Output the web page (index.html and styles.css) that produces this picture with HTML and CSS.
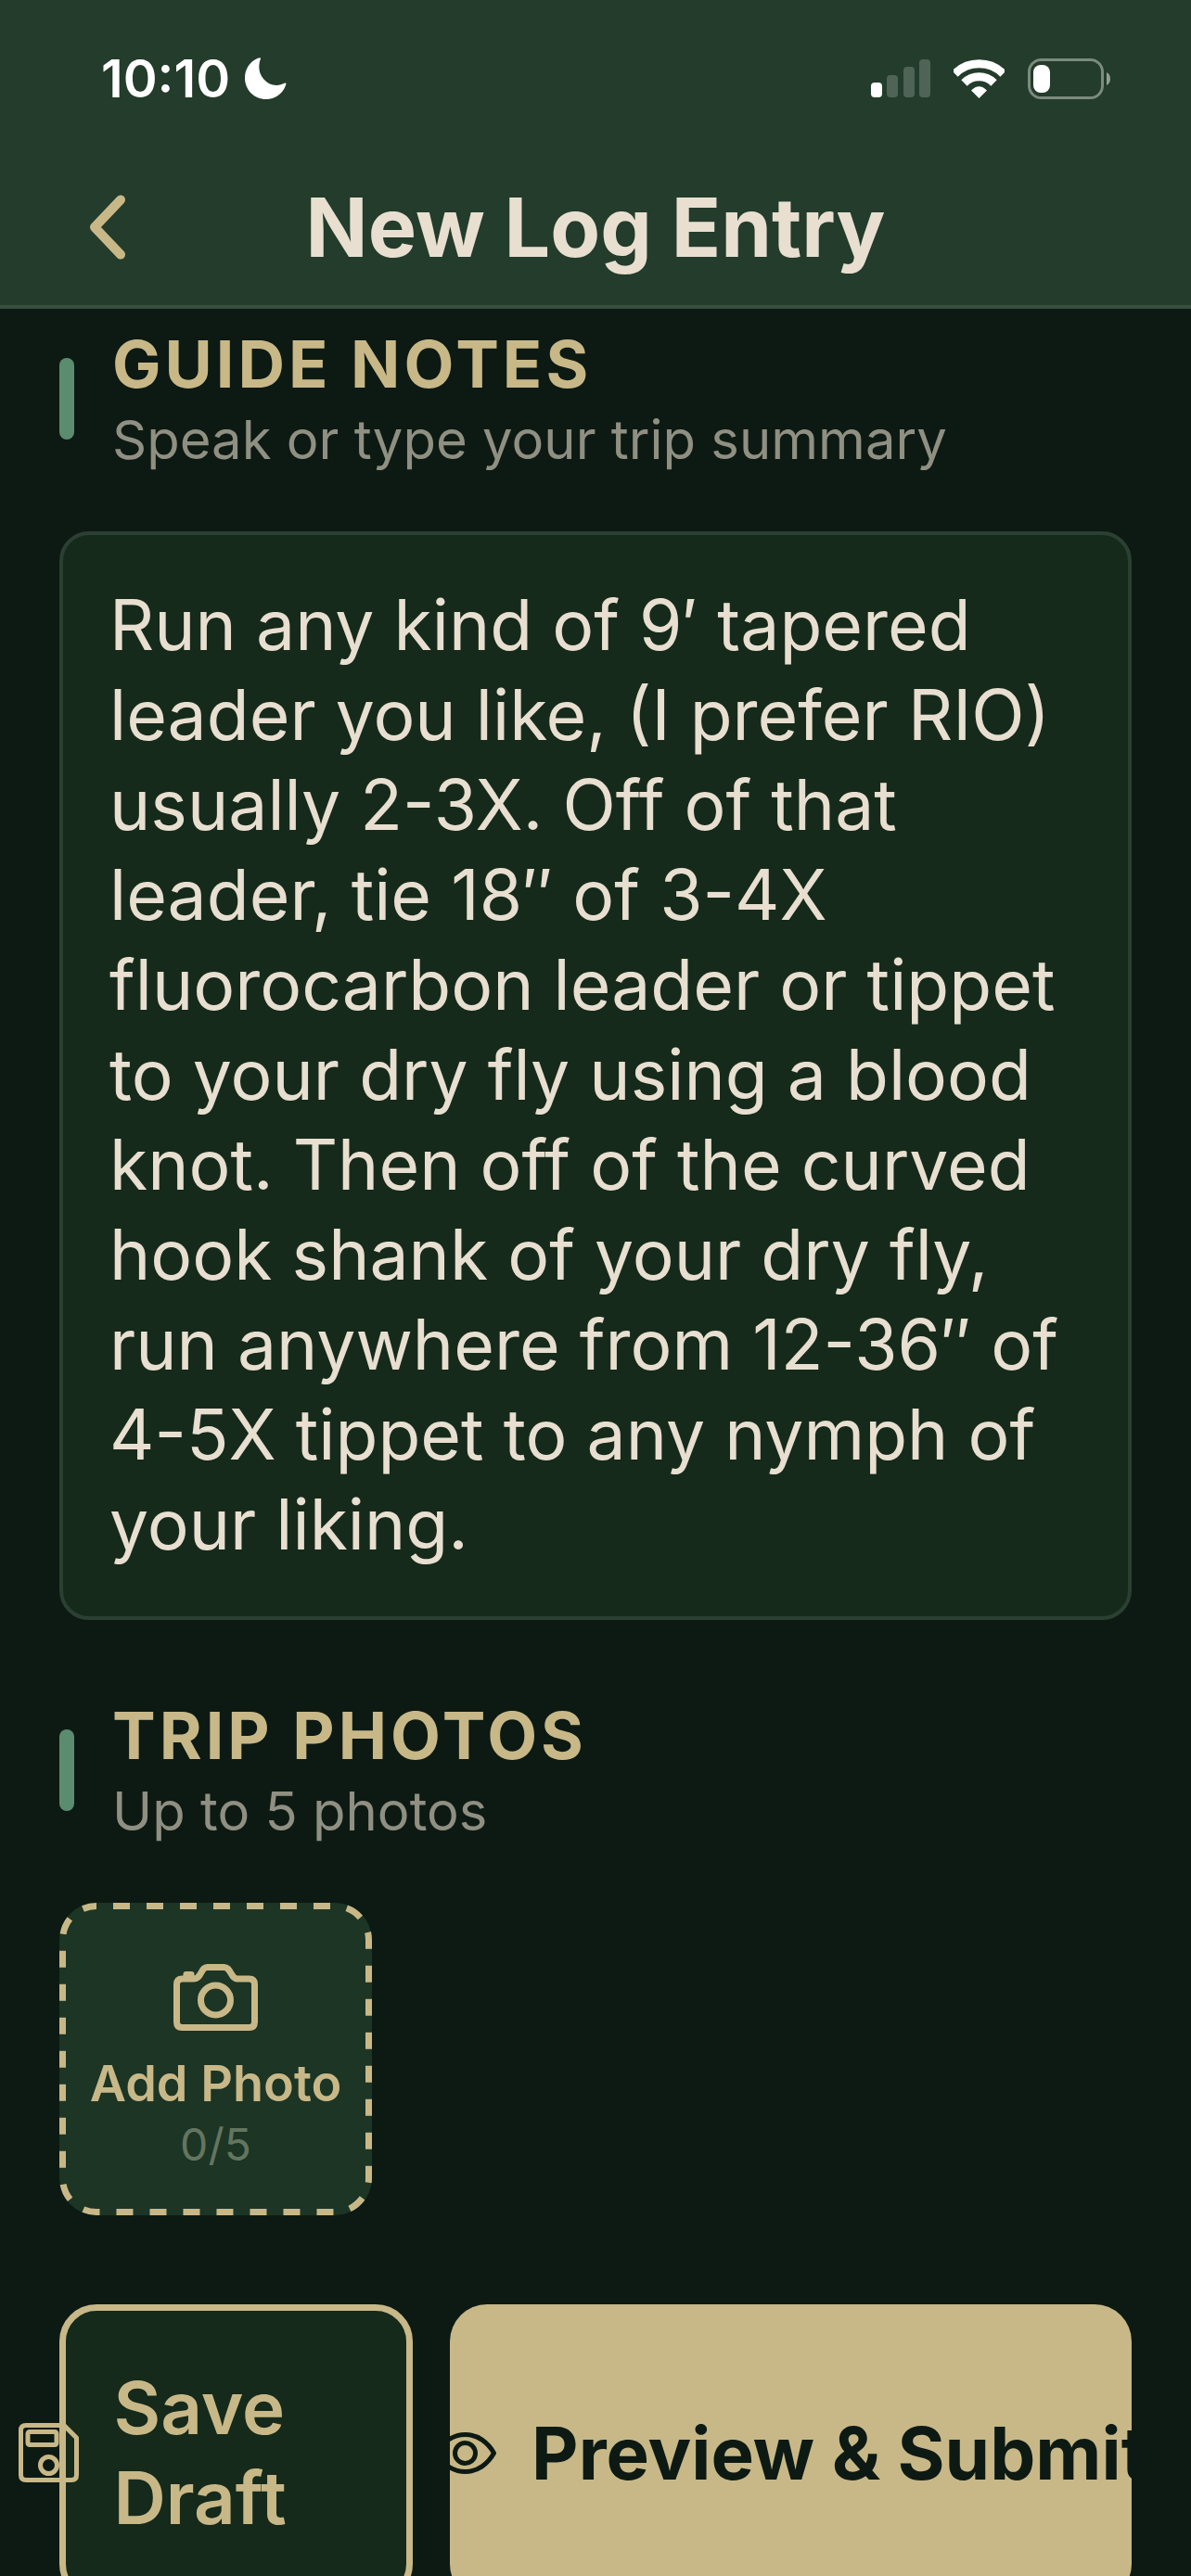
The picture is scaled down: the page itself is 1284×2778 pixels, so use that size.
FILE: index.html
```html
<!DOCTYPE html>
<html lang="en">
<head>
  <meta charset="UTF-8">
  <title>New Log Entry</title>
  <meta name="viewport" content="width=device-width, initial-scale=1.0">
  <link rel="stylesheet" href="styles.css">
</head>
<body>
  <div class="screen">
    <header class="header">
      <div class="status-bar">
        <div class="status-left">
          <span class="time">10:10</span>
          <svg width="45" height="46" viewBox="0 0 45 46" fill="#fff">
            <path d="M17 1C14 10 15 17 20 23C26 30 35 32 43 27.5C45 27.5 44.5 29 44 30C41 39 32 45 23 45C10 45 0 35 0 22C0 12 6 4 14 .8Q17 -.5 17 1Z"/>
          </svg>
        </div>
        <div class="status-right">
          <svg width="64" height="42" viewBox="0 0 64 42" fill="#fff">
            <rect x="0" y="25" width="12" height="16" rx="4"/>
            <g opacity=".2">
              <rect x="17" y="17" width="12" height="24" rx="4"/>
              <rect x="35" y="8" width="12" height="33" rx="4"/>
              <rect x="52" y="0" width="12" height="41" rx="4"/>
            </g>
          </svg>
          <svg width="55" height="42" viewBox="0 0 55 42" fill="none" stroke="#fff" stroke-width="9">
            <path d="M1.5 15.5A37 37 0 0 1 53.5 15.5"/>
            <path d="M11.5 25.5A22.5 22.5 0 0 1 43.5 25.5"/>
            <path d="M27.5 42L19 33.5Q27.5 25 36 33.5Z" fill="#fff" stroke="none"/>
          </svg>
          <svg width="90" height="44" viewBox="0 0 90 44">
            <rect x="1.5" y="1.5" width="79" height="41" rx="13" fill="none" stroke="#fff" stroke-opacity=".4" stroke-width="3"/>
            <rect x="6" y="7" width="18" height="30" rx="8" fill="#fff"/>
            <path d="M85 15Q89 17 89 22T85 29Z" fill="#fff" opacity=".5"/>
          </svg>
        </div>
      </div>
      <div class="nav">
        <button class="back" aria-label="Back">
          <svg width="40" height="70" viewBox="0 0 40 70" fill="none" stroke="currentColor" stroke-width="10" stroke-linecap="round" stroke-linejoin="round">
            <path d="M34 5.5L6 35L34 64.5"/>
          </svg>
        </button>
        <h1 class="title">New Log Entry</h1>
      </div>
    </header>

    <main class="content">
      <div class="section-header">
        <div class="accent"></div>
        <div>
          <h2 class="section-title"><label for="notes">GUIDE NOTES</label></h2>
          <p class="section-subtitle">Speak or type your trip summary</p>
        </div>
      </div>
      <textarea id="notes" class="notes" rows="11" spellcheck="false">Run any kind of 9′ tapered leader you like, (I prefer RIO) usually 2-3X. Off of that leader, tie 18″ of 3-4X fluorocarbon leader or tippet to your dry fly using a blood knot. Then off of the curved hook shank of your dry fly, run anywhere from 12-36″ of 4-5X tippet to any nymph of your liking.</textarea>

      <div class="section-header">
        <div class="accent"></div>
        <div>
          <h2 class="section-title">TRIP PHOTOS</h2>
          <p class="section-subtitle">Up to 5 photos</p>
        </div>
      </div>
      <button class="add-photo">
        <svg class="dashes"><rect/></svg>
        <svg width="91" height="72" viewBox="0 0 91 72" fill="none" stroke="currentColor" stroke-width="7">
          <path d="M3.5 22Q3.5 16 9.5 16H22C26 16 27.5 13.5 29.5 10C32 5.5 33 3.5 36.5 3.5H54.5C58 3.5 59.5 5.5 62 10C64 13.5 65.5 16 69 16H81.5Q87.5 16 87.5 22V62.5Q87.5 68.5 81.5 68.5H9.5Q3.5 68.5 3.5 62.5Z"/>
          <circle cx="45.5" cy="39" r="16"/>
          <rect x="10.5" y="8" width="12" height="8" rx="3" fill="currentColor" stroke="none"/>
        </svg>
        <span class="add-label">Add Photo</span>
        <span class="add-count">0/5</span>
      </button>

      <div class="actions">
        <button class="btn btn-save">
          <svg width="65" height="64" viewBox="0 0 65 64" fill="none" stroke="currentColor" stroke-width="5" stroke-linejoin="round">
            <path d="M8 2.5H49L62.5 16V56Q62.5 61.5 57 61.5H8Q2.5 61.5 2.5 56V8Q2.5 2.5 8 2.5Z"/>
            <rect x="10" y="9.5" width="31" height="14" rx="2"/>
            <circle cx="32.5" cy="45.5" r="9"/>
          </svg>
          <span class="save-label">Save Draft</span>
        </button>
        <button class="btn btn-submit">
          <svg width="67" height="45" viewBox="0 0 67 45" fill="none" stroke="currentColor" stroke-width="5" stroke-linejoin="round">
            <path d="M2.5 22.5C9 11 20 2.5 33.5 2.5S58 11 64.5 22.5C58 34 47 42.5 33.5 42.5S9 34 2.5 22.5Z"/>
            <circle cx="33.5" cy="22.5" r="11"/>
          </svg>
          <span>Preview &amp; Submit</span>
        </button>
      </div>
    </main>
  </div>
</body>
</html>
```

FILE: styles.css
```css
* {
  box-sizing: border-box;
}

body {
  margin: 0;
  background: #0d1a13;
  color: #e8dfd0;
  font-family: Inter, "Liberation Sans", sans-serif;
}

button {
  font-family: inherit;
  cursor: pointer;
}

svg {
  flex: none;
}

.screen {
  display: flex;
  flex-direction: column;
  height: 100vh;
  overflow: hidden;
}

/* Header */
.header {
  flex: none;
  background: #233c2b;
  border-bottom: 4px solid #384e3f;
}

.status-bar {
  display: flex;
  justify-content: space-between;
  align-items: center;
  height: 170px;
  padding: 0 86px 0 109px;
}

.status-left {
  display: flex;
  align-items: center;
  gap: 16px;
}

.status-right {
  display: flex;
  align-items: center;
  gap: 25px;
}

.time {
  color: #fff;
  font-size: 56px;
  font-weight: 600;
  line-height: 64px;
}

.nav {
  display: grid;
  grid-template-columns: 120px 1fr 120px;
  align-items: center;
  padding: 20px 56px 29px;
}

.back {
  display: flex;
  justify-content: center;
  padding: 0;
  border: none;
  background: none;
  color: #c8b888;
}

.title {
  margin: 0;
  text-align: center;
  font-size: 88px;
  font-weight: 700;
  line-height: 110px;
}

/* Sections */
.content {
  flex: 1;
  min-height: 0;
  padding: 16px 64px 0;
  overflow: hidden;
}

.section-header {
  display: flex;
  align-items: center;
  gap: 41px;
  margin-bottom: 62px;
}

.accent {
  width: 16px;
  height: 88px;
  border-radius: 8px;
  background: #5c8c6f;
}

.section-title {
  margin: 0;
  color: #c8b888;
  font-size: 70px;
  font-weight: 700;
  line-height: 88px;
  letter-spacing: 4px;
}

.section-subtitle {
  margin: 0;
  color: #8f8f82;
  font-size: 58px;
  line-height: 74px;
}

.notes {
  display: block;
  width: 100%;
  margin: 0 0 81px;
  padding: 48px 48px 51px 50px;
  border: 4px solid #2b4032;
  border-radius: 32px;
  outline: none;
  resize: none;
  overflow: hidden;
  background: #152a1b;
  color: #e8dfd0;
  font-family: inherit;
  font-size: 75px;
  line-height: 97px;
}

/* Photo picker */
.add-photo {
  position: relative;
  display: flex;
  flex-direction: column;
  align-items: center;
  width: 337px;
  height: 337px;
  padding: 66px 0 0;
  border: none;
  border-radius: 40px;
  background: #1c3525;
  color: #c8b888;
}

.dashes {
  position: absolute;
  inset: 0;
  width: 100%;
  height: 100%;
}

.dashes rect {
  x: 3.5px;
  y: 3.5px;
  width: calc(100% - 7px);
  height: calc(100% - 7px);
  rx: 36.5px;
  fill: none;
  stroke: #c8b888;
  stroke-width: 7;
  stroke-dasharray: 18 18;
  stroke-dashoffset: 18;
}

.add-label {
  margin-top: 24px;
  font-size: 54px;
  font-weight: 600;
  line-height: 66px;
}

.add-count {
  color: #64755f;
  font-size: 48px;
  line-height: 66px;
}

/* Bottom buttons */
.actions {
  display: flex;
  gap: 40px;
  margin-top: 96px;
}

.btn {
  box-sizing: content-box;
  display: flex;
  justify-content: center;
  align-items: center;
  gap: 38px;
  min-width: 0;
  padding: 56px 0;
  border-radius: 40px;
  font-size: 78px;
  line-height: 97px;
}

.btn-save {
  flex: 1 1 0;
  border: 7px solid #c8b888;
  background: #152a1b;
  color: #c8b888;
  font-weight: 600;
}

.save-label {
  flex: 0 0 100%;
  text-align: left;
}

.btn-submit {
  flex: 2 1 0;
  border: none;
  overflow: hidden;
  background: #c8b888;
  color: #0d1a13;
  font-weight: 700;
  white-space: nowrap;
}
```
